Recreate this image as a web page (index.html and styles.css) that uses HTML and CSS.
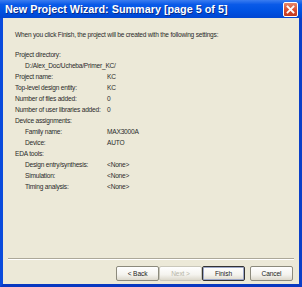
FILE: index.html
```html
<!DOCTYPE html>
<html>
<head>
<meta charset="utf-8">
<link rel="stylesheet" href="styles.css">
</head>
<body>
<div class="window">
  <div class="titlebar">
    <span class="title">New Project Wizard: Summary [page 5 of 5]</span>
    <span class="close"><svg width="13" height="13" viewBox="0 0 13 13"><path d="M3.5 3.5 L9.5 9.5 M9.5 3.5 L3.5 9.5" stroke="#fff" stroke-width="1.8" stroke-linecap="square"/></svg></span>
  </div>
  <div class="body">
    <div class="content">
      <p class="intro">When you click Finish, the project will be created with the following settings:</p>
      <div class="rows">
        <div class="row"><span class="label">Project directory:</span></div>
        <div class="row ind"><span class="label">D:/Alex_Doc/Ucheba/Primer_KC/</span></div>
        <div class="row"><span class="label">Project name:</span><span class="val">KC</span></div>
        <div class="row"><span class="label">Top-level design entity:</span><span class="val">KC</span></div>
        <div class="row"><span class="label">Number of files added:</span><span class="val">0</span></div>
        <div class="row"><span class="label">Number of user libraries added:</span><span class="val">0</span></div>
        <div class="row"><span class="label">Device assignments:</span></div>
        <div class="row ind"><span class="label">Family name:</span><span class="val">MAX3000A</span></div>
        <div class="row ind"><span class="label">Device:</span><span class="val">AUTO</span></div>
        <div class="row"><span class="label">EDA tools:</span></div>
        <div class="row ind"><span class="label">Design entry/synthesis:</span><span class="val">&lt;None&gt;</span></div>
        <div class="row ind"><span class="label">Simulation:</span><span class="val">&lt;None&gt;</span></div>
        <div class="row ind"><span class="label">Timing analysis:</span><span class="val">&lt;None&gt;</span></div>
      </div>
    </div>
    <div class="sep"></div>
    <div class="buttons">
      <button class="btn">&lt; Back</button>
      <button class="btn disabled">Next &gt;</button>
      <button class="btn default">Finish</button>
      <button class="btn cancel">Cancel</button>
    </div>
  </div>
</div>
</body>
</html>
```
FILE: styles.css
```css
html, body {
  margin: 0;
  padding: 0;
  width: 302px;
  height: 287px;
  overflow: hidden;
}
.window {
  width: 302px;
  height: 287px;
  box-sizing: border-box;
  display: flex;
  flex-direction: column;
  background: #0850E0;
  border-left: 3px solid #0A4BDC;
  border-right: 3px solid #0A3FC8;
  border-bottom: 3px solid #0838C0;
}
.titlebar {
  height: 18px;
  margin: 0 -3px;
  padding: 0 4px 0 5px;
  display: flex;
  align-items: center;
  justify-content: space-between;
  background: linear-gradient(#3A7CF0 0%, #0A5AE8 25%, #0052E2 60%, #0046D2 100%);
}
.title {
  color: #fff;
  font-family: "Liberation Sans", Arial, sans-serif;
  font-weight: bold;
  font-size: 10.8px;
  text-shadow: 1px 1px 0 #0A2D8A;
}
.close {
  width: 13px;
  height: 13px;
  background: linear-gradient(#E8876A, #D8482A 60%, #C13A20);
  border: 1px solid #fff;
  border-radius: 2px;
  display: flex;
}
.body {
  flex: 1;
  background: #ECE9D8;
  display: flex;
  flex-direction: column;
  font-family: "Liberation Sans", Arial, sans-serif;
  font-size: 6.6px;
  letter-spacing: -0.22px;
  color: #2a2a2a;
}
.content {
  flex: 1;
  padding: 11px 0 0 12px;
}
.intro {
  margin: 0 0 8.5px 0;
  height: 11px;
  line-height: 11px;
}
.row {
  display: flex;
  height: 11.06px;
  line-height: 11px;
}
.row .label {
  width: 92px;
  white-space: nowrap;
}
.row.ind .label {
  margin-left: 10px;
  width: 82px;
}
.sep {
  margin: 0 5px 0 5px;
  height: 0;
  border-top: 1px solid #ACA899;
  border-bottom: 1px solid #fff;
}
.buttons {
  display: flex;
  justify-content: flex-end;
  padding: 6px 6px 3px 0;
}
.btn {
  width: 43px;
  height: 15px;
  margin: 0;
  padding: 0;
  font-family: "Liberation Sans", Arial, sans-serif;
  font-size: 6.6px;
  letter-spacing: -0.1px;
  color: #222;
  background: linear-gradient(#FFFFFF, #F4F3EE 60%, #DCD8CB);
  border: 1px solid #8C8A7C;
  border-radius: 2px;
}
.btn.disabled {
  color: #B8B6A8;
  border-color: #C9C7BA;
}
.btn.default {
  border: 1px solid #333;
  box-shadow: inset 0 0 0 1px #9EA8C8;
}
.btn.cancel {
  margin-left: 5px;
}
```
